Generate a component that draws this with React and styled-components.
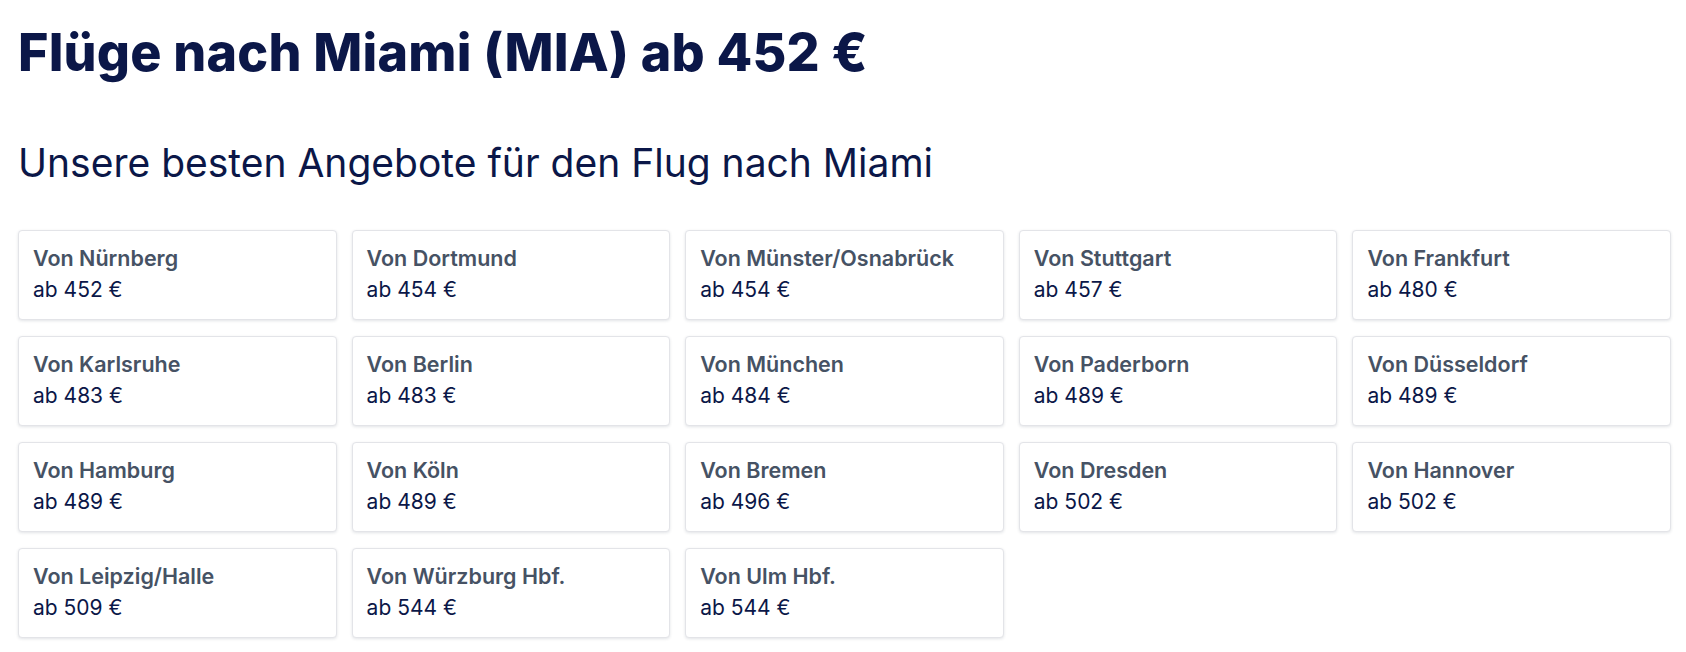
import React from 'react';
import styled, { createGlobalStyle } from 'styled-components';

const GlobalStyle = createGlobalStyle`
  body {
    margin: 0;
    background: #ffffff;
    font-family: Inter, "Noto Sans", sans-serif;
  }
`;

const Page = styled.div`
  padding: 22px 15px 20px 18px;
`;

const Title = styled.h1`
  margin: 0;
  font-size: 52px;
  line-height: 62px;
  font-weight: 800;
  color: #0b1748;
  letter-spacing: 0.2px;
`;

const Subtitle = styled.h2`
  margin: 56px 0 0;
  font-size: 39px;
  line-height: 46px;
  font-weight: 400;
  color: #0b1748;
`;

const Grid = styled.div`
  margin-top: 44px;
  display: grid;
  grid-template-columns: repeat(5, 1fr);
  column-gap: 15px;
  row-gap: 16px;
`;

const Card = styled.a`
  display: flex;
  flex-direction: column;
  height: 90px;
  box-sizing: border-box;
  padding: 13px 14px 0;
  border: 1px solid #e3e4e8;
  border-radius: 4px;
  box-shadow: 0 1px 3px rgba(20, 30, 60, 0.12);
  background: #fff;
  text-decoration: none;
  cursor: pointer;
`;

const City = styled.span`
  font-size: 21.5px;
  line-height: 28px;
  font-weight: 600;
  color: #465264;
`;

const Price = styled.span`
  margin-top: 4px;
  font-size: 21px;
  line-height: 28px;
  font-weight: 400;
  color: #0b1748;
`;

const offers = [
  ['Nürnberg', 452],
  ['Dortmund', 454],
  ['Münster/Osnabrück', 454],
  ['Stuttgart', 457],
  ['Frankfurt', 480],
  ['Karlsruhe', 483],
  ['Berlin', 483],
  ['München', 484],
  ['Paderborn', 489],
  ['Düsseldorf', 489],
  ['Hamburg', 489],
  ['Köln', 489],
  ['Bremen', 496],
  ['Dresden', 502],
  ['Hannover', 502],
  ['Leipzig/Halle', 509],
  ['Würzburg Hbf.', 544],
  ['Ulm Hbf.', 544],
];

export default function App() {
  return (
    <>
      <GlobalStyle />
      <Page>
        <Title>Flüge nach Miami (MIA) ab 452 €</Title>
        <Subtitle>Unsere besten Angebote für den Flug nach Miami</Subtitle>
        <Grid>
          {offers.map(([city, price]) => (
            <Card key={city}>
              <City>Von {city}</City>
              <Price>ab {price} €</Price>
            </Card>
          ))}
        </Grid>
      </Page>
    </>
  );
}
